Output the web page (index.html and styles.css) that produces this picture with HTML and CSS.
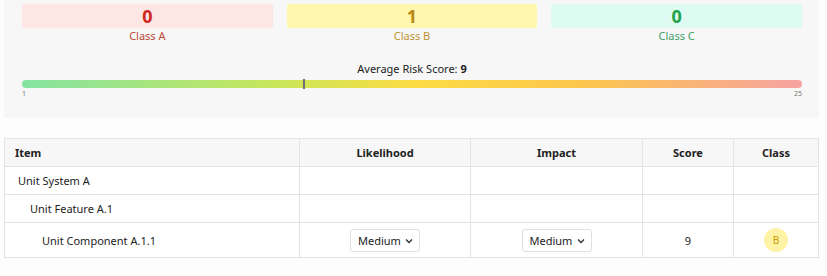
FILE: index.html
```html
<!DOCTYPE html>
<html>
<head>
  <meta charset="UTF-8" />
  <title>Risk Matrix</title>
  <link rel="stylesheet" href="styles.css">
</head>
<body>
  <div class="page">
    <div class="summary">
      <div class="class-counts">
        <div class="class-count class-a">
          <div class="count-box">0</div>
          <div class="count-label">Class A</div>
        </div>
        <div class="class-count class-b">
          <div class="count-box">1</div>
          <div class="count-label">Class B</div>
        </div>
        <div class="class-count class-c">
          <div class="count-box">0</div>
          <div class="count-label">Class C</div>
        </div>
      </div>
      <div class="avg-score">
        <div class="avg-title">Average Risk Score: <b>9</b></div>
        <div class="score-bar">
          <div class="score-marker" style="left: 36%;"></div>
        </div>
        <div class="score-scale">
          <span>1</span>
          <span>25</span>
        </div>
      </div>
    </div>

    <table class="risk-table">
      <thead>
        <tr>
          <th class="col-item">Item</th>
          <th class="col-likelihood">Likelihood</th>
          <th class="col-impact">Impact</th>
          <th class="col-score">Score</th>
          <th class="col-class">Class</th>
        </tr>
      </thead>
      <tbody>
        <tr>
          <td class="item level-0">Unit System A</td>
          <td></td>
          <td></td>
          <td></td>
          <td></td>
        </tr>
        <tr>
          <td class="item level-1">Unit Feature A.1</td>
          <td></td>
          <td></td>
          <td></td>
          <td></td>
        </tr>
        <tr class="leaf">
          <td class="item level-2">Unit Component A.1.1</td>
          <td class="center">
            <span class="select-wrap">
              <select>
                <option>Low</option>
                <option selected>Medium</option>
                <option>High</option>
              </select>
              <svg class="chevron" width="8" height="6" viewBox="0 0 8 6"><path d="M1 1.5 L4 4.5 L7 1.5" fill="none" stroke="#333" stroke-width="1.4"/></svg>
            </span>
          </td>
          <td class="center">
            <span class="select-wrap">
              <select>
                <option>Low</option>
                <option selected>Medium</option>
                <option>High</option>
              </select>
              <svg class="chevron" width="8" height="6" viewBox="0 0 8 6"><path d="M1 1.5 L4 4.5 L7 1.5" fill="none" stroke="#333" stroke-width="1.4"/></svg>
            </span>
          </td>
          <td class="center">9</td>
          <td class="center"><span class="badge badge-b">B</span></td>
        </tr>
      </tbody>
    </table>
  </div>
</body>
</html>
```

FILE: styles.css
```css
body {
  margin: 0;
  font-family: "Noto Sans", "Open Sans", sans-serif;
  background: #fdfdfd;
  color: #222;
}
.page {
  width: 815px;
  margin-left: 4px;
}
.summary {
  background: #f7f7f7;
  padding: 4px 17px 18px 18px;
}
.class-counts {
  display: grid;
  grid-template-columns: repeat(3, 1fr);
  gap: 14px;
}
.class-count {
  text-align: center;
}
.count-box {
  height: 24px;
  line-height: 24px;
  font-size: 18px;
  font-weight: bold;
}
.count-label {
  font-size: 11px;
  line-height: 16px;
}
.class-a .count-box {
  background: #fde6e3;
  color: #d0251d;
}
.class-a .count-label {
  color: #bb4a36;
}
.class-b .count-box {
  background: #fff7ae;
  color: #b98a12;
}
.class-b .count-label {
  color: #bd9433;
}
.class-c .count-box {
  background: #ddfbf0;
  color: #22a24a;
}
.class-c .count-label {
  color: #43a067;
}
.avg-score {
  margin-top: 17px;
}
.avg-title {
  text-align: center;
  font-size: 11px;
  line-height: 16px;
  color: #222;
}
.score-bar {
  position: relative;
  height: 8px;
  margin-top: 3px;
  border-radius: 4px;
  background: linear-gradient(to right, #84e3a2 0%, #c9e65a 33%, #fcdc44 50%, #fcc64c 72%, #f6a2a2 100%);
}
.score-marker {
  position: absolute;
  top: -1px;
  width: 2px;
  height: 10px;
  background: #6a7078;
}
.score-scale {
  display: flex;
  justify-content: space-between;
  font-size: 7px;
  line-height: 12px;
  color: #777;
}
.risk-table {
  width: 815px;
  margin-top: 20px;
  border-collapse: collapse;
  border: 1px solid #e3e3e3;
  font-size: 11px;
  background: #fff;
}
.risk-table th {
  background: #f7f7f7;
  font-weight: bold;
  height: 27px;
  padding: 0 10px;
  border: 1px solid #e3e3e3;
  text-align: center;
}
.risk-table th.col-item {
  text-align: left;
  width: 274px;
}
.col-likelihood {
  width: 150px;
}
.col-impact {
  width: 151px;
}
.col-score {
  width: 70px;
}
.risk-table td {
  height: 27px;
  padding: 0 10px;
  border: 1px solid #e3e3e3;
}
.risk-table tr.leaf td {
  height: 34px;
}
.risk-table td.center {
  text-align: center;
}
.item.level-0 {
  padding-left: 13px;
}
.item.level-1 {
  padding-left: 25px;
}
.item.level-2 {
  padding-left: 37px;
}
.select-wrap {
  position: relative;
  display: inline-block;
  vertical-align: middle;
}
.risk-table select {
  appearance: none;
  -webkit-appearance: none;
  font-family: inherit;
  font-size: 11px;
  width: 70px;
  height: 23px;
  padding: 0 16px 0 7px;
  border: 1px solid #e0e0e0;
  border-radius: 3px;
  background: #fff;
  color: #222;
}
.chevron {
  position: absolute;
  right: 7px;
  top: 9px;
  pointer-events: none;
}
.badge {
  display: inline-block;
  width: 24px;
  height: 24px;
  line-height: 24px;
  border-radius: 50%;
  font-size: 10px;
  vertical-align: middle;
}
.badge-b {
  background: #fff4a6;
  color: #c79a00;
}
```
